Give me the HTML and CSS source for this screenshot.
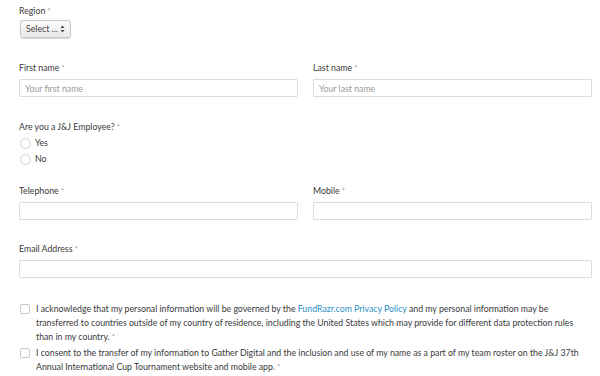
FILE: index.html
```html
<!DOCTYPE html>
<html>
<head>
<meta charset="utf-8">
<link rel="stylesheet" href="styles.css">
</head>
<body>
<form class="form">
  <div class="group g-region">
    <label class="label">Region <span class="req">*</span></label>
    <div class="select-wrap">
      <select class="select"><option>Select ...</option></select>
      <svg class="arrows" width="5" height="8" viewBox="0 0 5 8"><path d="M2.5 0.5 L4.5 3 L0.5 3 Z M2.5 7.5 L4.5 5 L0.5 5 Z" fill="#444"/></svg>
    </div>
  </div>

  <div class="row g-names">
    <div class="col">
      <label class="label">First name <span class="req">*</span></label>
      <input class="input" type="text" placeholder="Your first name">
    </div>
    <div class="col">
      <label class="label">Last name <span class="req">*</span></label>
      <input class="input" type="text" placeholder="Your last name">
    </div>
  </div>

  <div class="group g-emp">
    <label class="label">Are you a J&amp;J Employee? <span class="req">*</span></label>
    <div class="radios">
      <label class="radio-row"><input class="radio" type="radio" name="emp"> Yes</label>
      <label class="radio-row"><input class="radio" type="radio" name="emp"> No</label>
    </div>
  </div>

  <div class="row g-phones">
    <div class="col">
      <label class="label">Telephone <span class="req">*</span></label>
      <input class="input" type="text">
    </div>
    <div class="col">
      <label class="label">Mobile <span class="req">*</span></label>
      <input class="input" type="text">
    </div>
  </div>

  <div class="group g-email">
    <label class="label">Email Address <span class="req">*</span></label>
    <input class="input" type="text">
  </div>

  <div class="checks">
    <label class="check-row"><input class="check" type="checkbox"><span class="check-text">I acknowledge that my personal information will be governed by the <a class="link" href="#">FundRazr.com Privacy Policy</a> and my personal information may be transferred to countries outside of my country of residence, including the United States which may provide for different data protection rules than in my country. <span class="req">*</span></span></label>
    <label class="check-row"><input class="check" type="checkbox"><span class="check-text">I consent to the transfer of my information to Gather Digital and the inclusion and use of my name as a part of my team roster on the J&amp;J 37th Annual International Cup Tournament website and mobile app. <span class="req">*</span></span></label>
  </div>
</form>
</body>
</html>
```

FILE: styles.css
```css
* { box-sizing: border-box; }
html, body { margin: 0; padding: 0; background: #fff; }
body {
  font-family: Lato, "Open Sans", sans-serif;
  font-size: 8.75px;
  line-height: 14px;
  color: #3a3a3a;
}
.form {
  padding: 4px 8px 0 19px;
  display: flex;
  flex-direction: column;
}
.label { display: block; height: 14px; }
.req { color: #999; font-size: 7px; }

.select-wrap {
  position: relative;
  width: 51px;
  height: 18px;
  margin-top: 2px;
  margin-left: 1px;
}
.select {
  appearance: none;
  -webkit-appearance: none;
  width: 100%;
  height: 100%;
  margin: 0;
  padding: 0 0 0 5px;
  font: inherit;
  color: #444;
  border: 1px solid #c8c8c8;
  border-radius: 3px;
  background: linear-gradient(#fbfbfb, #e9e9e9);
  box-shadow: 0 0.5px 1px rgba(0,0,0,0.15);
}
.arrows { position: absolute; right: 6px; top: 5px; }

.row { display: flex; gap: 15px; }
.col { flex: 1; min-width: 0; }
.g-names { margin-top: 23px; }
.input {
  display: block;
  width: 100%;
  height: 18px;
  margin: 4px 0 0;
  padding: 0 5px;
  font: inherit;
  color: #333;
  border: 1px solid #dcdcdc;
  border-radius: 1px;
  background: #fff;
  outline: none;
}
.input::placeholder { color: #9a9a9a; }

.g-emp { margin-top: 23px; }
.radios { display: flex; flex-direction: column; margin-top: 1px; }
.radio-row { display: flex; align-items: center; height: 16px; gap: 4px; }
.radio {
  appearance: none;
  -webkit-appearance: none;
  width: 11px;
  height: 11px;
  margin: 0 0 0 1px;
  border: 1px solid #cfcfcf;
  border-radius: 50%;
  background: #fff;
}

.g-phones { margin-top: 17px; }
.g-email { margin-top: 22px; }

.checks { margin-top: 24px; display: flex; flex-direction: column; gap: 2px; }
.check-row { display: flex; align-items: flex-start; }
.check {
  appearance: none;
  -webkit-appearance: none;
  flex: none;
  width: 10px;
  height: 10px;
  margin: 2px 6px 0 1px;
  border: 1px solid #c8c8c8;
  border-radius: 2px;
  background: #fff;
}
.check-text { flex: 1; padding-right: 8px; }
.link { color: #2b8fc6; text-decoration: none; }
```
